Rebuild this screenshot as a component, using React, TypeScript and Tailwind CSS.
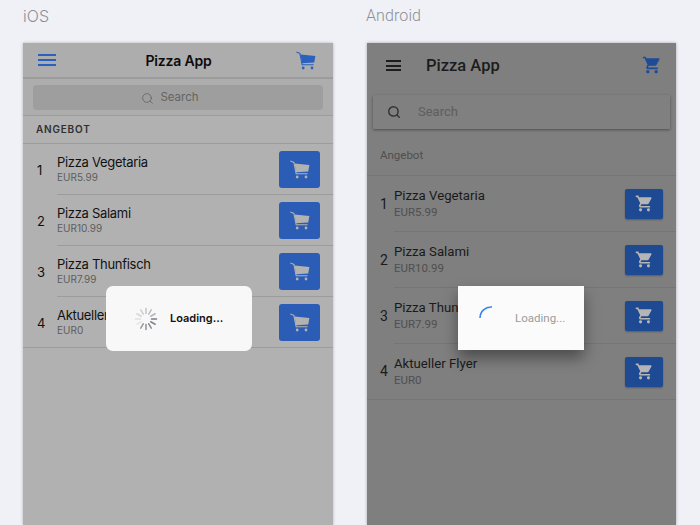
import { Search } from 'lucide-react'

const items = [
  { n: 1, name: 'Pizza Vegetaria', price: 'EUR5.99' },
  { n: 2, name: 'Pizza Salami', price: 'EUR10.99' },
  { n: 3, name: 'Pizza Thunfisch', price: 'EUR7.99' },
  { n: 4, name: 'Aktueller Flyer', price: 'EUR0' },
]

// outline-ish iOS cart, basket filled
function IosCart({ className }: { className: string }) {
  return (
    <svg viewBox="0 0 20 19" className={className} fill="currentColor">
      <path d="M0.5 0.6 L4.4 1.9 L6.6 13.2 L17.6 13.2 L17.6 14.3 L5.7 14.3 L3.4 2.8 L0.2 1.6 Z" />
      <path d="M4.6 3.6 L19.4 5 L18.2 11.6 L6 12.3 Z" />
      <circle cx="7.2" cy="17" r="1.4" />
      <circle cx="16" cy="17" r="1.4" />
    </svg>
  )
}

// material shopping_cart
function MdCart({ className }: { className: string }) {
  return (
    <svg viewBox="0 0 24 24" className={className} fill="currentColor">
      <path d="M7 18c-1.1 0-1.99.9-1.99 2S5.9 22 7 22s2-.9 2-2-.9-2-2-2zM1 2v2h2l3.6 7.59-1.35 2.45c-.16.28-.25.61-.25.96 0 1.1.9 2 2 2h12v-2H7.42c-.14 0-.25-.11-.25-.25l.03-.12.9-1.63h7.45c.75 0 1.41-.41 1.75-1.03l3.58-6.49c.08-.14.12-.31.12-.48 0-.55-.45-1-1-1H5.21l-.94-2H1zm16 16c-1.1 0-1.99.9-1.99 2s.89 2 1.99 2 2-.9 2-2-.9-2-2-2z" />
    </svg>
  )
}

function IosSpinner() {
  const spokes = [0, 30, 60, 90, 120, 150, 180, 210, 240, 270, 300, 330]
  return (
    <svg viewBox="0 0 24 24" className="h-6 w-6">
      {spokes.map((a, i) => (
        <line
          key={a}
          x1="12"
          y1="1.5"
          x2="12"
          y2="6.5"
          stroke="#6b6f78"
          strokeWidth="1.5"
          strokeLinecap="round"
          opacity={i >= 3 && i <= 7 ? 0.9 - (i - 3) * 0.05 : 0.12 + ((i + 4) % 12) * 0.06}
          transform={`rotate(${a} 12 12)`}
        />
      ))}
    </svg>
  )
}

function IosPanel() {
  return (
    <div className="relative h-[482px] w-[310px] bg-[#b1b1b1] shadow-[0_0_3px_rgba(0,0,0,0.25)] font-['Inter',sans-serif]">
      <div className="flex h-[36px] items-center justify-between border-b-2 border-[#9c9c9c] bg-[#adadad] pl-[15px] pr-[17px]">
        <div className="flex w-[18px] flex-col gap-[3.5px]">
          <div className="h-[1.5px] bg-[#2b60bd]" />
          <div className="h-[1.5px] bg-[#2b60bd]" />
          <div className="h-[1.5px] bg-[#2b60bd]" />
        </div>
        <span className="ml-[5px] text-[14px] font-semibold tracking-[-0.2px] text-[#0c0c0c]">Pizza App</span>
        <IosCart className="h-[19px] w-[20px] text-[#2b60bd]" />
      </div>
      <div className="bg-[#adadad] px-[10px] pb-[5px] pt-[6px]">
        <div className="flex h-[25px] items-center justify-center gap-[6px] rounded-[4px] bg-[#9e9e9e] pr-[16px] pt-[1px] text-[11.5px] text-[#646464]">
          <Search className="h-[13px] w-[13px]" strokeWidth={1.5} />
          <span>Search</span>
        </div>
      </div>
      <div className="flex h-[29px] items-center border-y border-[#9c9c9c] pl-[13px] text-[10px] font-semibold tracking-[0.08em] text-[#303030]">
        ANGEBOT
      </div>
      {items.map((it, i) => (
        <div key={it.n} className={i === 3 ? 'flex h-[51px] items-center border-b border-[#9c9c9c]' : 'flex h-[51px] items-center'}>
          <span className="w-[34px] pl-[14px] pt-[3px] text-[13px] text-[#111]">{it.n}</span>
          <div className={i === 3 ? 'flex h-full flex-1 items-center justify-between pr-[13px]' : 'flex h-full flex-1 items-center justify-between border-b border-[#9c9c9c] pr-[13px]'}>
            <div className="-mt-[2px] flex flex-col">
              <span className="text-[13px] leading-[18px] tracking-[-0.3px] text-[#111]">{it.name}</span>
              <span className="text-[10px] leading-[13px] text-[#5d5d5d]">{it.price}</span>
            </div>
            <div className="flex h-[37px] w-[41px] items-center justify-center rounded-[3px] bg-[#2b5cb6]">
              <IosCart className="h-[19px] w-[20px] text-[#b2b2b2]" />
            </div>
          </div>
        </div>
      ))}
      <div className="absolute left-[83px] top-[243px] flex h-[65px] w-[146px] items-center rounded-[7px] bg-[#f8f8f8] pl-[28px]">
        <IosSpinner />
        <span className="ml-[12px] text-[11px] font-semibold text-[#111]">Loading...</span>
      </div>
    </div>
  )
}

function AndroidPanel() {
  return (
    <div className="relative h-[482px] w-[309px] bg-[#7f7f7f] shadow-[0_0_3px_rgba(0,0,0,0.3)] font-['Roboto',sans-serif]">
      <div className="flex h-[46px] items-center justify-between pl-[19px] pr-[14px]">
        <div className="mb-[1px] flex w-[15px] flex-col gap-[2.5px]">
          <div className="h-[2px] bg-[#1d1d1d]" />
          <div className="h-[2px] bg-[#1d1d1d]" />
          <div className="h-[2px] bg-[#1d1d1d]" />
        </div>
        <span className="ml-[25px] flex-1 pt-[1px] text-[16.5px] font-medium text-[#1c1c1c]">Pizza App</span>
        <MdCart className="mb-[2px] h-[20px] w-[20px] text-[#1e4b96]" />
      </div>
      <div className="px-[6px] pt-[6px]">
        <div className="flex h-[34px] items-center rounded-[1px] bg-[#808080] pl-[14px] text-[13px] text-[#5e5e5e] shadow-[0_1px_3px_rgba(0,0,0,0.4)]">
          <Search className="h-[14px] w-[14px] text-[#333]" strokeWidth={2.5} />
          <span className="ml-[17px]">Search</span>
        </div>
      </div>
      <div className="flex h-[47px] items-center border-b border-[#757575] pl-[13px] pt-[8px] text-[11.5px] text-[#4f4f4f]">
        Angebot
      </div>
      {items.map((it, i) => (
        <div key={it.n} className={i === 3 ? 'flex h-[56px] items-center border-b border-[#757575]' : 'flex h-[56px] items-center'}>
          <span className="w-[27px] pl-[13px] text-[14px] text-[#1a1a1a]">{it.n}</span>
          <div className={i === 3 ? 'flex h-full flex-1 items-center justify-between pr-[13px]' : 'flex h-full flex-1 items-center justify-between border-b border-[#757575] pr-[13px]'}>
            <div className="flex flex-col">
              <span className="text-[13.2px] leading-[18px] text-[#1a1a1a]">{it.name}</span>
              <span className="text-[11.5px] leading-[15px] text-[#4f4f4f]">{it.price}</span>
            </div>
            <div className="flex h-[30px] w-[38px] items-center justify-center rounded-[2px] bg-[#1e4a93] shadow-[0_1px_2px_rgba(0,0,0,0.3)]">
              <MdCart className="h-[19px] w-[19px] text-[#b5b5b5]" />
            </div>
          </div>
        </div>
      ))}
      <div className="absolute left-[91px] top-[243px] flex h-[64px] w-[126px] items-center bg-[#fbfbfb] pl-[21px] shadow-[0_8px_14px_rgba(0,0,0,0.4)]">
        <svg viewBox="0 0 14 14" className="mb-[10px] h-[14px] w-[14px]" fill="none">
          <path d="M1 12 A11 11 0 0 1 13 1" stroke="#3b82f0" strokeWidth="1.6" />
        </svg>
        <span className="ml-[22px] pt-[2px] text-[11.5px] text-[#9b9b9b]">Loading...</span>
      </div>
    </div>
  )
}

export default function App() {
  return (
    <div className="flex h-[525px] w-[700px] gap-[34px] overflow-hidden bg-[#f0f1f6] pl-[23px]">
      <div className="flex flex-col">
        <div className="flex h-[43px] items-start pt-[6px] text-[16px] font-light leading-[20px] text-[#8c8f98] font-['Inter',sans-serif]">
          iOS
        </div>
        <IosPanel />
      </div>
      <div className="flex flex-col">
        <div className="-ml-px flex h-[43px] items-start pt-[6px] text-[16px] font-light leading-[20px] tracking-[0.1px] text-[#8c8f98] font-['Roboto',sans-serif]">
          Android
        </div>
        <AndroidPanel />
      </div>
    </div>
  )
}
